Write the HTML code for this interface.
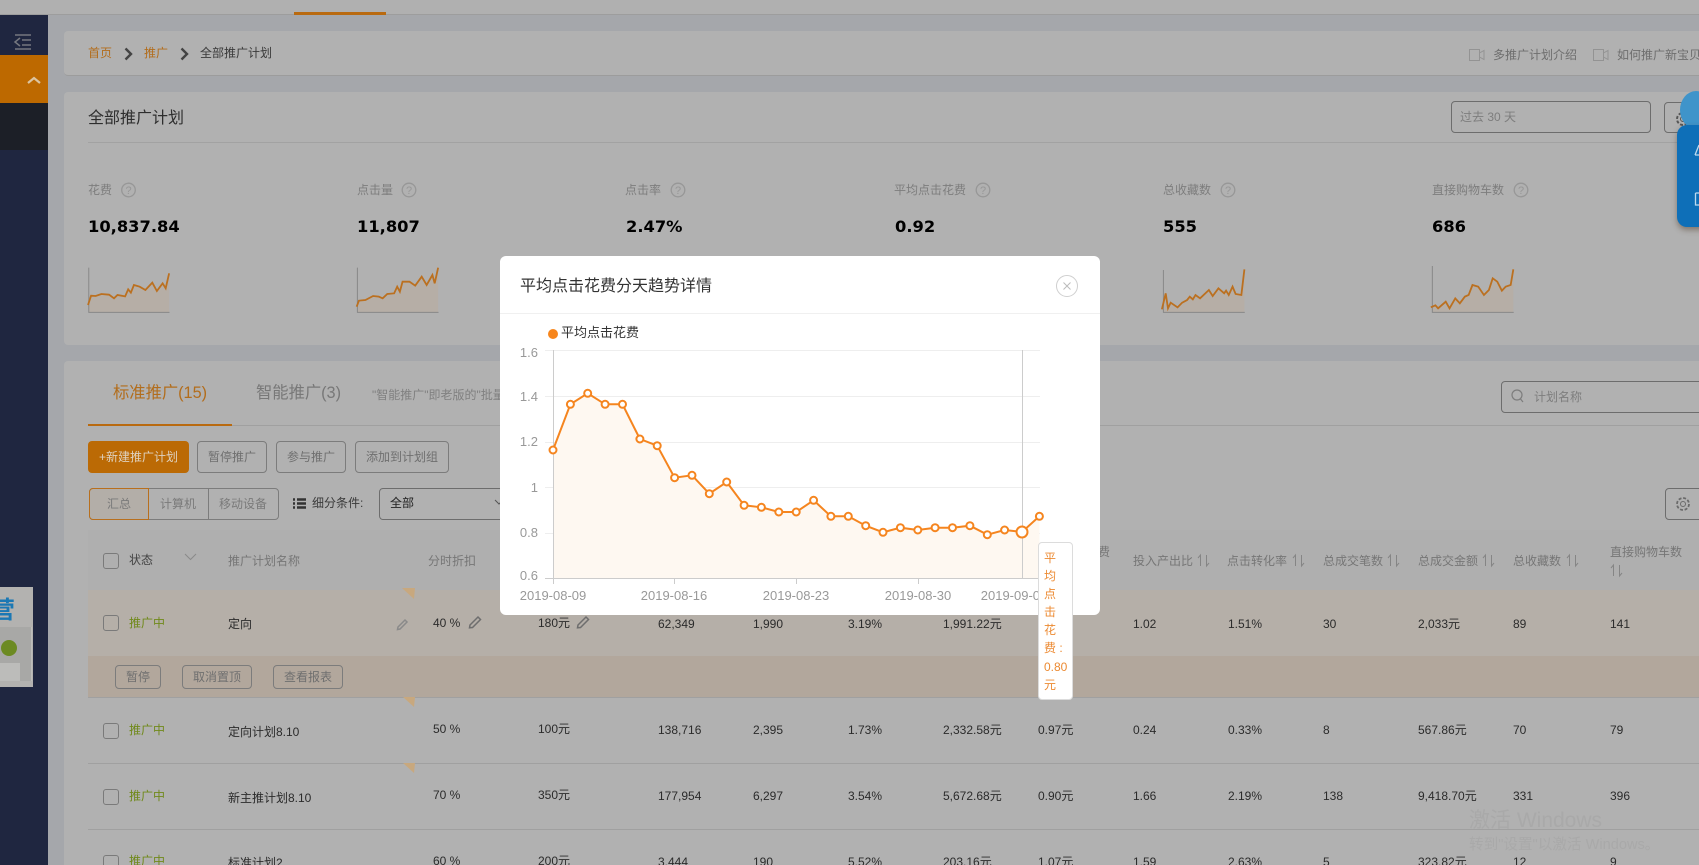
<!DOCTYPE html>
<html lang="zh"><head><meta charset="utf-8"><title>全部推广计划</title>
<style>
html,body{margin:0;padding:0;width:1699px;height:865px;overflow:hidden}
body{background:#a5a7ab;font:12px/16px "Liberation Sans","Noto Sans CJK SC",sans-serif;color:#2b2b2b}
#p{position:relative;width:1699px;height:865px;overflow:hidden;background:#a5a7ab}
.b{position:absolute}
.t{position:absolute;white-space:nowrap;line-height:16px}
.btn{position:absolute;box-sizing:border-box;border:1px solid #7c7c7c;border-radius:4px;text-align:center;color:#6f6f6f}
.cb{position:absolute;box-sizing:border-box;width:16px;height:16px;border:1px solid #7a7a7a;border-radius:3px;left:103px}
.g{color:#70891a}.h{color:#767676}.o{color:#b26d1c}.l{color:#7d7d7d}
.v{font:bold 16.3px/20px "DejaVu Sans",sans-serif;color:#000}
.line{position:absolute;height:1px;background:#a0a0a0}
svg{position:absolute;overflow:visible}
.modal{position:absolute;left:500px;top:256px;width:600px;height:359px;background:#fff;border-radius:6px;overflow:hidden}
</style></head><body><div id="p">
<!-- top bar -->
<div class="b" style="left:0;top:0;width:1699px;height:15px;background:#b0b0b0;border-bottom:1px solid #9d9d9d;box-sizing:border-box"></div>
<div class="b" style="left:294px;top:12px;width:92px;height:3px;background:#b96a10"></div>
<!-- sidebar -->
<div class="b" style="left:0;top:15px;width:48px;height:850px;background:#1f2640"></div>
<div class="b" style="left:0;top:55px;width:48px;height:48px;background:#bd6900"></div>
<div class="b" style="left:0;top:103px;width:48px;height:47px;background:#1c1f27"></div>
<svg style="left:0;top:0" width="48" height="100"><path d="M15 35H31M22 40H31M22 45H31M15 49H31M20 38L15 42L20 46" fill="none" stroke="#75777f" stroke-width="1.5"/><path d="M28 83L34 78L40 83" fill="none" stroke="#dcc4a0" stroke-width="2.2"/></svg>
<!-- thumbnail -->
<div class="b" style="left:0;top:587px;width:33px;height:100px;background:#b3b2b0;overflow:hidden">
<div class="t" style="left:-9px;top:10px;font-size:24px;line-height:28px;color:#1b78b4;font-weight:bold">营</div>
<div class="b" style="left:-3px;top:40px;width:34px;height:54px;background:#a8a8a6;border-right:1px solid #bdbdbb"></div>
<div class="b" style="left:1px;top:53px;width:16px;height:16px;border-radius:50%;background:#6c8a22"></div>
<div class="b" style="left:0;top:76px;width:20px;height:18px;background:#bcbcba"></div>
</div>
<!-- breadcrumb card -->
<div class="b" style="left:64px;top:31px;width:1635px;height:45px;background:#b1b1b1;border-radius:4px 0 0 4px;border-bottom:1px solid #9c9c9c;box-sizing:border-box"></div>
<div class="t o" style="left:88px;top:45px">首页</div>
<svg style="left:124px;top:48px" width="10" height="12"><path d="M1.500 .5L7 6L1.500 11.500" fill="none" stroke="#444" stroke-width="2.400"/></svg>
<div class="t o" style="left:144px;top:45px">推广</div>
<svg style="left:180px;top:48px" width="10" height="12"><path d="M1.500 .5L7 6L1.500 11.500" fill="none" stroke="#444" stroke-width="2.400"/></svg>
<div class="t" style="left:200px;top:45px;color:#3a3a3a">全部推广计划</div>
<svg style="left:1469px;top:49px" width="16" height="12"><path d="M.5 .5H10.500V11.500H.5ZM10.500 4L15 1.500V10.500L10.500 8" fill="none" stroke="#939393"/></svg>
<div class="t" style="left:1493px;top:47px;color:#6e6e6e">多推广计划介绍</div>
<svg style="left:1593px;top:49px" width="16" height="12"><path d="M.5 .5H10.500V11.500H.5ZM10.500 4L15 1.500V10.500L10.500 8" fill="none" stroke="#939393"/></svg>
<div class="t" style="left:1617px;top:47px;color:#6e6e6e">如何推广新宝贝</div>
<!-- stats card -->
<div class="b" style="left:64px;top:92px;width:1635px;height:253px;background:#b1b1b1;border-radius:4px 0 0 4px"></div>
<div class="t" style="left:88px;top:111px;font-size:16px;color:#2e2e2e">全部推广计划</div>
<div class="line" style="left:88px;top:142px;width:1611px;background:#a2a2a2"></div>
<div class="btn" style="left:1451px;top:101px;width:200px;height:32px;border-color:#6d6d6d"></div>
<div class="t l" style="left:1460px;top:109px">过去 30 天</div>
<div class="btn" style="left:1664px;top:102px;width:50px;height:31px;border-color:#6d6d6d"></div>
<svg style="left:1675px;top:111px" width="16" height="16"><circle cx="8" cy="8" r="6" fill="none" stroke="#555" stroke-width="2" stroke-dasharray="3 1.700"/><circle cx="8" cy="8" r="2.500" fill="none" stroke="#555"/></svg>
<!-- stats -->
<div class="t l" style="left:88px;top:182px">花费</div>
<div class="t l" style="left:357px;top:182px">点击量</div>
<div class="t l" style="left:625px;top:182px">点击率</div>
<div class="t l" style="left:894px;top:182px">平均点击花费</div>
<div class="t l" style="left:1163px;top:182px">总收藏数</div>
<div class="t l" style="left:1432px;top:182px">直接购物车数</div>
<svg style="left:0;top:180px" width="1699" height="20" fill="none" stroke="#979797" stroke-width="1.300" font-size="11">
<circle cx="128.500" cy="10" r="6.800"/><circle cx="409" cy="10" r="6.800"/><circle cx="678" cy="10" r="6.800"/><circle cx="983" cy="10" r="6.800"/><circle cx="1228" cy="10" r="6.800"/><circle cx="1521" cy="10" r="6.800"/>
<g fill="#979797" stroke="none" text-anchor="middle" font-family="Liberation Sans"><text x="128.500" y="14">?</text><text x="409" y="14">?</text><text x="678" y="14">?</text><text x="983" y="14">?</text><text x="1228" y="14">?</text><text x="1521" y="14">?</text></g>
</svg>
<div class="t v" style="left:88px;top:217px">10,837.84</div>
<div class="t v" style="left:357px;top:217px">11,807</div>
<div class="t v" style="left:626px;top:217px">2.47%</div>
<div class="t v" style="left:895px;top:217px">0.92</div>
<div class="t v" style="left:1163px;top:217px">555</div>
<div class="t v" style="left:1432px;top:217px">686</div>
<!-- sparklines -->
<svg style="left:0;top:0" width="600" height="340" viewBox="0 0 1568 1020" preserveAspectRatio="none">
<path d="M230 915L238 887L250 888L265 882L285 884L298 895L307 885L327 889L335 868L342 878L350 855L365 860L380 870L398 848L410 873L425 850L433 865L442 820V937H232Z" fill="#b6aea6"/>
<path d="M232 803V937H443" fill="none" stroke="#888" stroke-width="1" vector-effect="non-scaling-stroke"/>
<path d="M230 915L238 887L250 888L265 882L285 884L298 895L307 885L327 889L335 868L342 878L350 855L365 860L380 870L398 848L410 873L425 850L433 865L442 820" fill="none" stroke="#bb7020" stroke-width="1.800" vector-effect="non-scaling-stroke"/>
<path d="M932 920L938 902L955 900L975 888L990 890L1000 895L1012 882L1030 880L1038 860L1045 875L1052 845L1070 845L1085 857L1102 830L1115 855L1130 825L1136 850L1145 803V937H934Z" fill="#b6aea6"/>
<path d="M934 803V937H1146" fill="none" stroke="#888" stroke-width="1" vector-effect="non-scaling-stroke"/>
<path d="M932 920L938 902L955 900L975 888L990 890L1000 895L1012 882L1030 880L1038 860L1045 875L1052 845L1070 845L1085 857L1102 830L1115 855L1130 825L1136 850L1145 803" fill="none" stroke="#bb7020" stroke-width="1.800" vector-effect="non-scaling-stroke"/>
</svg>
<svg style="left:1100px;top:0" width="599" height="340" viewBox="0 0 1568 1020" preserveAspectRatio="none">
<path d="M162 928L172 880L178 925L185 908L203 922L215 908L228 900L235 890L243 898L250 885L262 895L285 870L295 888L310 865L325 880L330 872L337 885L347 860L355 882L370 885L378 808V937H166Z" fill="#b6aea6"/>
<path d="M166 810V937H379" fill="none" stroke="#888" stroke-width="1" vector-effect="non-scaling-stroke"/>
<path d="M162 928L172 880L178 925L185 908L203 922L215 908L228 900L235 890L243 898L250 885L262 895L285 870L295 888L310 865L325 880L330 872L337 885L347 860L355 882L370 885L378 808" fill="none" stroke="#bb7020" stroke-width="1.800" vector-effect="non-scaling-stroke"/>
<path d="M866 922L878 916L885 925L905 905L915 925L930 895L942 910L955 890L965 885L975 855L990 860L1005 885L1018 870L1028 835L1040 845L1052 872L1062 860L1075 855L1082 808V937H870Z" fill="#b6aea6"/>
<path d="M870 798V937H1083" fill="none" stroke="#888" stroke-width="1" vector-effect="non-scaling-stroke"/>
<path d="M866 922L878 916L885 925L905 905L915 925L930 895L942 910L955 890L965 885L975 855L990 860L1005 885L1018 870L1028 835L1040 845L1052 872L1062 860L1075 855L1082 808" fill="none" stroke="#bb7020" stroke-width="1.800" vector-effect="non-scaling-stroke"/>
</svg>
<!-- blue widget -->
<div class="b" style="left:1680px;top:91px;width:32px;height:38px;border-radius:50%;background:#3f94ca"></div>
<div class="b" style="left:1677px;top:125px;width:40px;height:102px;border-radius:10px;background:#0e6fb8;box-shadow:0 3px 6px rgba(70,50,30,.45)"></div>
<svg style="left:1690px;top:140px" width="9" height="70"><path d="M5 15L9 5M5 15H9M5.500 53H9M5.500 53V65H9" fill="none" stroke="#bcd9ee" stroke-width="1.300"/></svg>
<!-- table card -->
<div class="b" style="left:64px;top:361px;width:1635px;height:504px;background:#b1b1b1;border-radius:4px 0 0 0"></div>
<div class="t o" style="left:113px;top:385px;font-size:16.300px">标准推广(15)</div>
<div class="t" style="left:256px;top:385px;font-size:16.300px;color:#787878">智能推广(3)</div>
<div class="t" style="left:372px;top:387px;color:#808080">"智能推广"即老版的"批量推广"</div>
<div class="line" style="left:88px;top:425px;width:1611px;background:#a0a0a0"></div>
<div class="b" style="left:88px;top:424px;width:144px;height:2px;background:#b96a10"></div>
<div class="btn" style="left:1501px;top:381px;width:220px;height:32px;border-color:#6d6d6d"></div>
<svg style="left:1510px;top:388px" width="16" height="16"><circle cx="7" cy="7" r="5" fill="none" stroke="#7d7d7d" stroke-width="1.200"/><path d="M10.500 11L13 14" stroke="#7d7d7d" stroke-width="1.200"/></svg>
<div class="t l" style="left:1534px;top:389px">计划名称</div>
<div class="btn" style="left:88px;top:441px;width:101px;height:32px;background:#bb6a05;border:none;color:#dfd2c0;line-height:32px">+新建推广计划</div>
<div class="btn" style="left:197px;top:441px;width:70px;height:32px;line-height:30px">暂停推广</div>
<div class="btn" style="left:276px;top:441px;width:70px;height:32px;line-height:30px">参与推广</div>
<div class="btn" style="left:355px;top:441px;width:94px;height:32px;line-height:30px">添加到计划组</div>
<div class="btn" style="left:89px;top:488px;width:190px;height:32px"></div>
<div class="btn" style="left:89px;top:488px;width:60px;height:32px;line-height:30px;border-color:#b86f1d;background:#b3aea8;color:#7a7a7a;border-radius:4px 0 0 4px">汇总</div>
<div class="t" style="left:160px;top:496px;color:#7a7a7a">计算机</div>
<div class="b" style="left:208px;top:488px;width:1px;height:32px;background:#7c7c7c"></div>
<div class="t" style="left:219px;top:496px;color:#7a7a7a">移动设备</div>
<svg style="left:293px;top:498px" width="14" height="12"><path d="M0 1.500H2M4 1.500H13M0 5.500H2M4 5.500H13M0 9.500H2M4 9.500H13" stroke="#333" stroke-width="2.400" fill="none"/></svg>
<div class="t" style="left:312px;top:495px;color:#3a3a3a">细分条件:</div>
<div class="btn" style="left:379px;top:488px;width:140px;height:32px;border-color:#6d6d6d"></div>
<div class="t" style="left:390px;top:495px;color:#222">全部</div>
<svg style="left:494px;top:499px" width="10" height="8"><path d="M1 1L5 5L9 1" fill="none" stroke="#555"/></svg>
<div class="btn" style="left:1665px;top:488px;width:50px;height:32px;border-color:#6d6d6d"></div>
<svg style="left:1675px;top:496px" width="16" height="16"><circle cx="8" cy="8" r="6" fill="none" stroke="#6a6a6a" stroke-width="1.800" stroke-dasharray="3 1.700"/><circle cx="8" cy="8" r="2.500" fill="none" stroke="#6a6a6a"/></svg>
<!-- table header -->
<div class="b" style="left:88px;top:530px;width:1611px;height:60px;background:#afafaf"></div>
<div class="cb" style="top:553px"></div>
<div class="t" style="left:129px;top:552px;color:#444">状态</div>
<svg style="left:184px;top:553px" width="13" height="8"><path d="M1 1L6.500 6.500L12 1" fill="none" stroke="#8a8a8a"/></svg>
<div class="t h" style="left:228px;top:553px">推广计划名称</div>
<div class="t h" style="left:428px;top:553px">分时折扣</div>
<div class="t h" style="left:1038px;top:544px">平均点击花费</div>
<div class="t h" style="left:1133px;top:553px">投入产出比</div>
<div class="t h" style="left:1227px;top:553px">点击转化率</div>
<div class="t h" style="left:1323px;top:553px">总成交笔数</div>
<div class="t h" style="left:1418px;top:553px">总成交金额</div>
<div class="t h" style="left:1513px;top:553px">总收藏数</div>
<div class="t h" style="left:1610px;top:544px">直接购物车数</div>
<svg style="left:0;top:0" width="1699" height="865" fill="none" stroke="#858585">
<path d="M1200.500 566V555L1198 558M1206.500 555V566L1209 563"/>
<path d="M1295.500 566V555L1293 558M1301.500 555V566L1304 563"/>
<path d="M1390.500 566V555L1388 558M1396.500 555V566L1399 563"/>
<path d="M1485.500 566V555L1483 558M1491.500 555V566L1494 563"/>
<path d="M1569.500 566V555L1567 558M1575.500 555V566L1578 563"/>
<path d="M1613.500 576V565L1611 568M1619.500 565V576L1622 573"/>
</svg>
<!-- rows -->
<div class="b" style="left:88px;top:590px;width:1611px;height:66px;background:#b5afa8"></div>
<div class="b" style="left:88px;top:656px;width:1611px;height:41px;background:#b2a79c"></div>
<div class="line" style="left:88px;top:697px;width:1611px"></div>
<div class="line" style="left:88px;top:763px;width:1611px"></div>
<div class="line" style="left:88px;top:829px;width:1611px"></div>
<svg style="left:0;top:0" width="1699" height="865" fill="#c8a87e"><path d="M402 588H415L414 599Z"/><path d="M403 697H415L414 707Z"/><path d="M403 763H415L414 773Z"/></svg>
<div class="btn" style="left:115px;top:665px;width:46px;height:24px;line-height:22px">暂停</div>
<div class="btn" style="left:182px;top:665px;width:70px;height:24px;line-height:22px">取消置顶</div>
<div class="btn" style="left:273px;top:665px;width:70px;height:24px;line-height:22px">查看报表</div>
<!-- row 1 -->
<div class="cb" style="top:615px"></div><div class="t g" style="left:129px;top:615px">推广中</div>
<div class="t" style="left:228px;top:616px">定向</div><div class="t" style="left:433px;top:615px">40 %</div><div class="t" style="left:538px;top:615px">180元</div>
<svg style="left:396px;top:618px" width="12" height="13"><path d="M2 9L9 2L11 4L4 11L1.500 11.500Z" fill="none" stroke="#8a8a8a" stroke-width="1.500"/></svg>
<svg style="left:468px;top:615px" width="14" height="14"><path d="M2 10L10 2L12.500 4.500L4.500 12.500L1.500 12.800Z" fill="none" stroke="#6e6e6e" stroke-width="1.500"/></svg>
<svg style="left:576px;top:615px" width="14" height="14"><path d="M2 10L10 2L12.500 4.500L4.500 12.500L1.500 12.800Z" fill="none" stroke="#6e6e6e" stroke-width="1.500"/></svg>
<div class="t" style="left:658px;top:616px">62,349</div><div class="t" style="left:753px;top:616px">1,990</div><div class="t" style="left:848px;top:616px">3.19%</div><div class="t" style="left:943px;top:616px">1,991.22元</div>
<div class="t" style="left:1133px;top:616px">1.02</div><div class="t" style="left:1228px;top:616px">1.51%</div><div class="t" style="left:1323px;top:616px">30</div><div class="t" style="left:1418px;top:616px">2,033元</div><div class="t" style="left:1513px;top:616px">89</div><div class="t" style="left:1610px;top:616px">141</div>
<!-- row 2 -->
<div class="cb" style="top:723px"></div><div class="t g" style="left:129px;top:722px">推广中</div>
<div class="t" style="left:228px;top:724px">定向计划8.10</div><div class="t" style="left:433px;top:721px">50 %</div><div class="t" style="left:538px;top:721px">100元</div>
<div class="t" style="left:658px;top:722px">138,716</div><div class="t" style="left:753px;top:722px">2,395</div><div class="t" style="left:848px;top:722px">1.73%</div><div class="t" style="left:943px;top:722px">2,332.58元</div><div class="t" style="left:1038px;top:722px">0.97元</div>
<div class="t" style="left:1133px;top:722px">0.24</div><div class="t" style="left:1228px;top:722px">0.33%</div><div class="t" style="left:1323px;top:722px">8</div><div class="t" style="left:1418px;top:722px">567.86元</div><div class="t" style="left:1513px;top:722px">70</div><div class="t" style="left:1610px;top:722px">79</div>
<!-- row 3 -->
<div class="cb" style="top:789px"></div><div class="t g" style="left:129px;top:788px">推广中</div>
<div class="t" style="left:228px;top:790px">新主推计划8.10</div><div class="t" style="left:433px;top:787px">70 %</div><div class="t" style="left:538px;top:787px">350元</div>
<div class="t" style="left:658px;top:788px">177,954</div><div class="t" style="left:753px;top:788px">6,297</div><div class="t" style="left:848px;top:788px">3.54%</div><div class="t" style="left:943px;top:788px">5,672.68元</div><div class="t" style="left:1038px;top:788px">0.90元</div>
<div class="t" style="left:1133px;top:788px">1.66</div><div class="t" style="left:1228px;top:788px">2.19%</div><div class="t" style="left:1323px;top:788px">138</div><div class="t" style="left:1418px;top:788px">9,418.70元</div><div class="t" style="left:1513px;top:788px">331</div><div class="t" style="left:1610px;top:788px">396</div>
<!-- row 4 -->
<div class="cb" style="top:855px"></div><div class="t g" style="left:129px;top:853px">推广中</div>
<div class="t" style="left:228px;top:855px">标准计划2</div><div class="t" style="left:433px;top:853px">60 %</div><div class="t" style="left:538px;top:853px">200元</div>
<div class="t" style="left:658px;top:854px">3,444</div><div class="t" style="left:753px;top:854px">190</div><div class="t" style="left:848px;top:854px">5.52%</div><div class="t" style="left:943px;top:854px">203.16元</div><div class="t" style="left:1038px;top:854px">1.07元</div>
<div class="t" style="left:1133px;top:854px">1.59</div><div class="t" style="left:1228px;top:854px">2.63%</div><div class="t" style="left:1323px;top:854px">5</div><div class="t" style="left:1418px;top:854px">323.82元</div><div class="t" style="left:1513px;top:854px">12</div><div class="t" style="left:1610px;top:854px">9</div>
<!-- watermark -->
<div class="t" style="left:1469px;top:809px;font-size:21px;line-height:24px;color:#a9a9a9">激活 Windows</div>
<div class="t" style="left:1469px;top:837px;font-size:14.600px;color:#a9a9a9">转到"设置"以激活 Windows。</div>
<!-- modal -->
<div class="modal"></div>
<div class="t" style="left:520px;top:279px;font-size:16px;color:#333">平均点击花费分天趋势详情</div>
<div class="b" style="left:500px;top:313px;width:600px;height:1px;background:#f0f0f0"></div>
<svg style="left:1056px;top:275px" width="22" height="22"><circle cx="11" cy="11" r="10.500" fill="none" stroke="#cfcfcf"/><path d="M7.500 7.500L14.500 14.500M14.500 7.500L7.500 14.500" stroke="#bbb"/></svg>
<div class="b" style="left:548px;top:329px;width:10px;height:10px;border-radius:50%;background:#f7861c"></div>
<div class="t" style="left:561px;top:325px;font-size:13px;color:#333">平均点击花费</div>
<svg style="left:0;top:0" width="1699" height="865">
<path d="M545 350.500H1040M545 396.500H1040M545 442.500H1040M545 487.500H1040M545 533.500H1040" stroke="#eeeeee" fill="none"/>
<path d="M553 450L570.400 404.300L587.700 393.300L605.100 404.300L622.500 404.300L639.900 439L657.200 445.700L674.600 477.700L692 475.300L709.300 493.700L726.700 482L744.100 505.300L761.400 507.300L778.800 512L796.200 512L813.600 500.300L830.900 516.300L848.300 516.300L865.700 525.700L883 532.300L900.400 527.700L917.800 530L935.100 527.700L952.500 527.700L969.900 525.700L987.300 534.700L1004.600 530L1022 532L1039.400 516.300V578H553Z" fill="#fef8f1"/>
<path d="M553.500 350V584M674.500 578V584M796.500 578V584M918.500 578V584M1022.500 350V578M545 578.500H1040" stroke="#cccccc" fill="none"/>
<path d="M553 450L570.400 404.300L587.700 393.300L605.100 404.300L622.500 404.300L639.900 439L657.200 445.700L674.600 477.700L692 475.300L709.300 493.700L726.700 482L744.100 505.300L761.400 507.300L778.800 512L796.200 512L813.600 500.300L830.900 516.300L848.300 516.300L865.700 525.700L883 532.300L900.400 527.700L917.800 530L935.100 527.700L952.500 527.700L969.900 525.700L987.300 534.700L1004.600 530L1022 532L1039.400 516.300" fill="none" stroke="#f5851f" stroke-width="2"/>
<g fill="#fff" stroke="#f5851f" stroke-width="2">
<circle cx="553" cy="450" r="3.500"/><circle cx="570.400" cy="404.300" r="3.500"/><circle cx="587.700" cy="393.300" r="3.500"/><circle cx="605.100" cy="404.300" r="3.500"/><circle cx="622.500" cy="404.300" r="3.500"/><circle cx="639.900" cy="439" r="3.500"/><circle cx="657.200" cy="445.700" r="3.500"/><circle cx="674.600" cy="477.700" r="3.500"/><circle cx="692" cy="475.300" r="3.500"/><circle cx="709.300" cy="493.700" r="3.500"/><circle cx="726.700" cy="482" r="3.500"/><circle cx="744.100" cy="505.300" r="3.500"/><circle cx="761.400" cy="507.300" r="3.500"/><circle cx="778.800" cy="512" r="3.500"/><circle cx="796.200" cy="512" r="3.500"/><circle cx="813.600" cy="500.300" r="3.500"/><circle cx="830.900" cy="516.300" r="3.500"/><circle cx="848.300" cy="516.300" r="3.500"/><circle cx="865.700" cy="525.700" r="3.500"/><circle cx="883" cy="532.300" r="3.500"/><circle cx="900.400" cy="527.700" r="3.500"/><circle cx="917.800" cy="530" r="3.500"/><circle cx="935.100" cy="527.700" r="3.500"/><circle cx="952.500" cy="527.700" r="3.500"/><circle cx="969.900" cy="525.700" r="3.500"/><circle cx="987.300" cy="534.700" r="3.500"/><circle cx="1004.600" cy="530" r="3.500"/><circle cx="1022" cy="532" r="5.500"/><circle cx="1039.400" cy="516.300" r="3.500"/>
</g>
<g font-family="Liberation Sans" font-size="13" fill="#999" text-anchor="end"><text x="538" y="357">1.6</text><text x="538" y="401">1.4</text><text x="538" y="446">1.2</text><text x="538" y="492">1</text><text x="538" y="537">0.8</text><text x="538" y="580">0.6</text></g>
<g font-family="Liberation Sans" font-size="13" fill="#999" text-anchor="middle"><text x="553" y="600">2019-08-09</text><text x="674" y="600">2019-08-16</text><text x="796" y="600">2019-08-23</text><text x="918" y="600">2019-08-30</text><text x="1014" y="600">2019-09-06</text></g>
</svg>
<!-- tooltip -->
<div class="b" style="left:1038px;top:542px;width:35px;height:158px;box-sizing:border-box;background:#fff;border:1px solid #dcdcdc;border-radius:4px;padding:6px 0 0 5px;color:#ec8a32;font-size:12px;line-height:18.100px">平<br>均<br>点<br>击<br>花<br>费 :<br>0.80<br>元</div>
</div></body></html>
